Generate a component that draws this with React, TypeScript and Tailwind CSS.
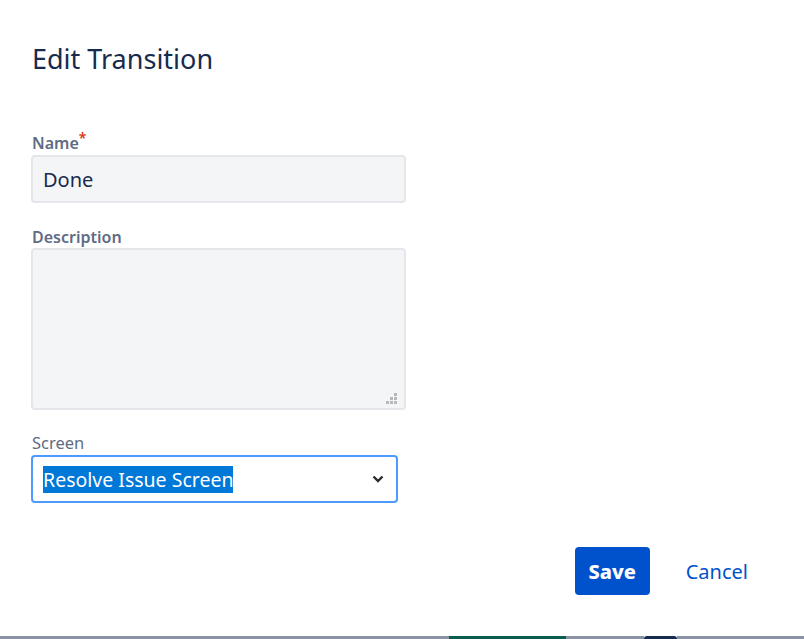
import React from "react";

const font = { fontFamily: '"Noto Sans", "Open Sans", sans-serif' };

function Grip() {
  return (
    <svg width="11" height="11" viewBox="0 0 11 11" className="absolute right-[7px] bottom-[4px]">
      <g fill="#b7b9bd">
        <rect x="8" y="0" width="3" height="3" />
        <rect x="4" y="4" width="3" height="3" />
        <rect x="8" y="4" width="3" height="3" />
        <rect x="0" y="8" width="3" height="3" />
        <rect x="4" y="8" width="3" height="3" />
        <rect x="8" y="8" width="3" height="3" />
      </g>
    </svg>
  );
}

export default function App() {
  return (
    <div className="w-[804px] h-[639px] bg-white overflow-hidden" style={font}>
      <div className="h-[636px] px-[31px] pt-[41px] flex flex-col">
        <h1 className="text-[27px] leading-[36px] text-[#172b4d] pl-px">Edit Transition</h1>

        <label className="mt-[56px] h-5 leading-5 text-[16px] font-semibold text-[#5e6c84] pl-px">
          Name<span className="text-[#de350b] text-[14px] align-top relative -top-[5px]">*</span>
        </label>
        <div className="mt-[2px] w-[375px] h-12 rounded-[4px] border-2 border-[#e4e6ea] bg-[#f4f5f7] flex items-center pl-[10px] pt-[2px] text-[20px] text-[#172b4d]">
          Done
        </div>

        <label className="mt-[24px] h-5 leading-5 text-[16px] font-semibold text-[#5e6c84] pl-px">
          Description
        </label>
        <div className="relative mt-px w-[375px] h-[162px] rounded-[4px] border-2 border-[#e4e6ea] bg-[#f4f5f7]">
          <Grip />
        </div>

        <label className="mt-[23px] h-5 leading-5 text-[16.5px] text-[#5e6c84] pl-px">Screen</label>
        <div className="mt-[2px] w-[367px] h-12 rounded-[4px] border-2 border-[#4c9aff] bg-white flex items-center justify-between pl-[10px] pr-[12px]">
          <span className="bg-[#0078d7] text-white text-[19.5px] leading-[27px]">Resolve Issue Screen</span>
          <svg width="12" height="8" viewBox="0 0 12 8">
            <path d="M1.5 1.5 L6 6 L10.5 1.5" fill="none" stroke="#2b2b2b" strokeWidth="2.4" />
          </svg>
        </div>

        <div className="mt-[44px] flex justify-end items-center gap-6 mr-[13px]">
          <button className="w-[75px] h-12 pt-[2px] rounded-[4px] bg-[#0052cc] text-white text-[20px] font-extrabold">Save</button>
          <button className="h-12 px-3 pt-[2px] text-[#0052cc] text-[20px]">Cancel</button>
        </div>
      </div>
      <div className="flex h-[3px]">
        <div className="w-[449px] bg-[#8993a4]" />
        <div className="w-[117px] bg-[#0b5e4f]" />
        <div className="w-[78px] bg-[#8993a4]" />
        <div className="w-[33px] bg-[#172b4d] rounded-t-[6px]" />
        <div className="flex-1 bg-[#8993a4]" />
      </div>
    </div>
  );
}
